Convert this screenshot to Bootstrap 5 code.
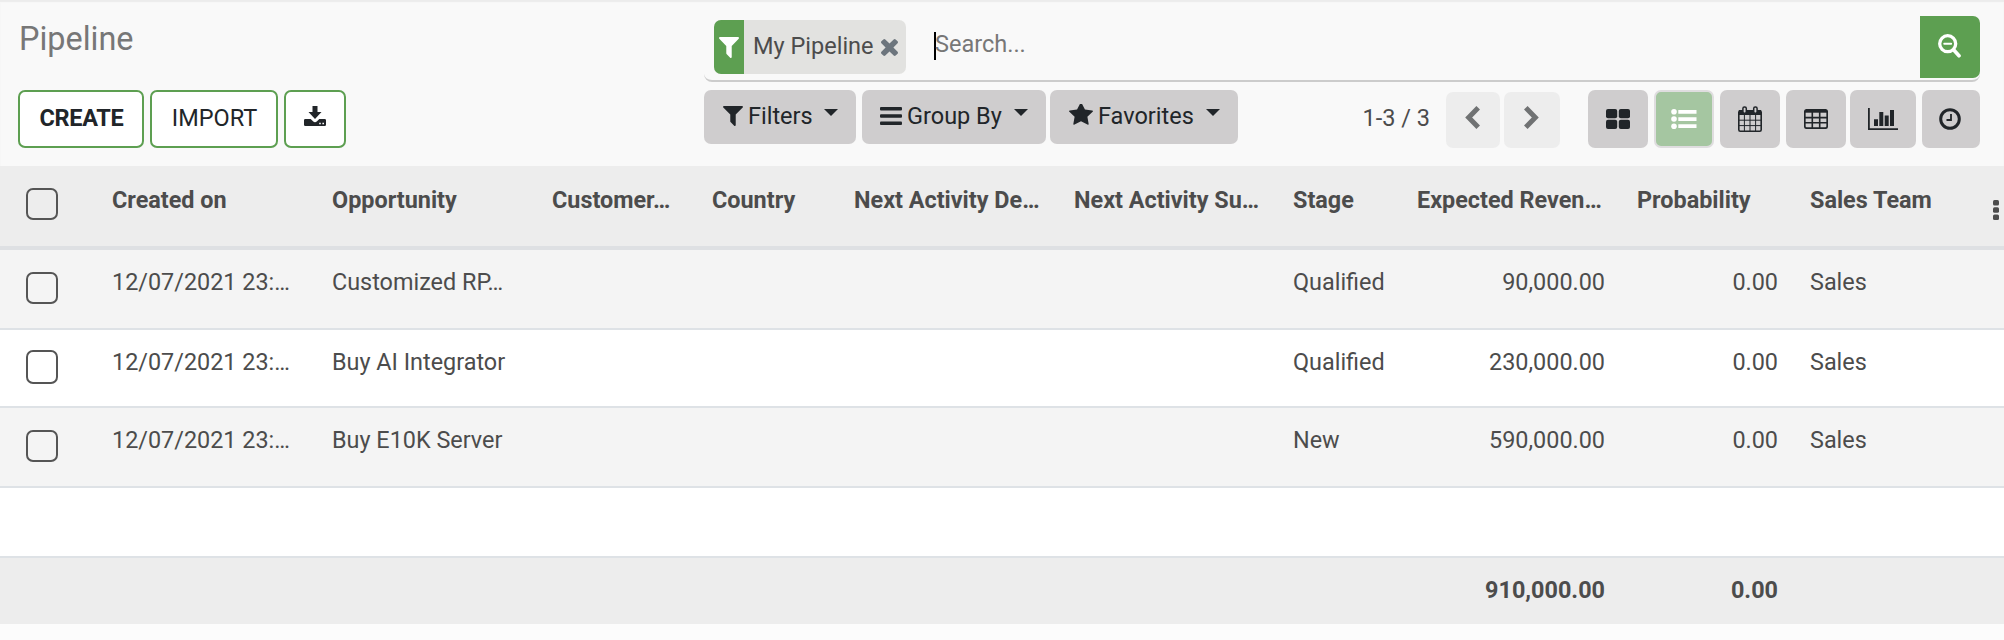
<!DOCTYPE html>
<html lang="en">
<head>
<meta charset="utf-8">
<title>Pipeline</title>
<meta name="viewport" content="width=device-width, initial-scale=1">
<link href="https://cdn.jsdelivr.net/npm/bootstrap@5.3.0/dist/css/bootstrap.min.css" rel="stylesheet">
<style>
  body { font-family: Roboto, sans-serif; font-size: 23.5px; line-height: 36px; color: #4c4c4c; background: #fcfcfc; overflow: hidden; }
  svg { display: block; flex: none; }
  .control-panel { height: 166px; background: #f9f9f9; padding: 16px 24px 0 18px; box-shadow: inset 0 2px 1px #ececec; }
  .panel-left { width: 686px; }
  .view-title { font-size: 32.4px; line-height: 46px; height: 74px; color: #777; padding-left: 1px; }
  .btn { font-size: 23.5px; line-height: 36px; color: #212529; border: 0; border-radius: 7px; padding: 0; white-space: nowrap; }
  .btn-outline-brand { height: 58px; background: #fff; border: 2px solid #5d9f51; padding: 0 18px 2px 19px; }
  .btn-outline-brand.narrow { width: 62px; padding: 0 1px 6px 0; }
  .btn-create { font-weight: 700; letter-spacing: -.3px; }
  .search-bar { height: 66px; border-bottom: 2px solid #ccc; border-radius: 0 0 8px 8px; }
  .facet { width: 192px; height: 54px; margin: 4px 0 0 10px; background: #e2e2e0; border-radius: 7px; overflow: hidden; }
  .facet-icon { width: 30px; background: #5d9f51; }
  .facet-label { width: 137px; padding: 0 0 3px 9px; }
  .caret-line { width: 2px; height: 28px; background: #000; margin: 16px 0 0 28px; }
  .search-hint { color: #777; line-height: 36px; margin-top: 10px; margin-left: -1px; }
  .btn-search { width: 60px; height: 62px; background: #5d9f51; border-radius: 0 7px 7px 0; padding: 0 1px 2px 0; }
  .btn-tool { background: #cfcdce; height: 58px; }
  .btn-menu { height: 54px; padding: 0 16px 2px 19px; }
  .menu-caret { border: 7px solid transparent; border-top-color: #212529; border-bottom: 0; margin-top: -7px; margin-left: 12px; }
  .pager-text { padding: 10px 0 3px; margin-right: 16px; }
  .btn-pager { height: 56px; background: #ededed; margin-top: 2px; padding: 0 1px 5px 0; }
  .btn-tool.selected { background: #a5c6a1; border: 2px solid #dfdddf; }
  .list-table { table-layout: fixed; border-collapse: separate; border-spacing: 0; width: 2004px; font-size: 23.4px; margin: 0; color: #4c4c4c; }
  .list-table th, .list-table td { padding: 14px 16px 0; vertical-align: top; white-space: nowrap; border: 0 solid #dee2e6; box-shadow: none; color: #4c4c4c; background: #fff; }
  .list-table tr { border: 0; }
  .list-table thead th { height: 84px; padding-top: 16px; background: #ededed; border-bottom-width: 4px; border-color: #dee0e3; }
  .list-table tbody td { border-bottom-width: 2px; height: 80px; }
  .list-table tbody tr.low td { height: 78px; }
  .list-table tbody tr.blank td { height: 70px; }
  .list-table tbody tr.odd td { background: #f4f4f4; }
  .list-table tfoot td { height: 66px; background: #ededed; font-weight: 700; }
  .list-table .pick { padding: 22px 0 0 26px; }
  .list-table .low .pick { padding-top: 20px; }
  .list-table .low .box { height: 34px; }
  .list-table .num { text-align: right; }
  .form-check-input.box { display: block; float: none; width: 32px; height: 32px; margin: 0; border: 2px solid #555; border-radius: 7px; background: transparent; }
  .list-table thead .more { padding: 34px 0 0 13px; }
</style>
</head>
<body>
<header class="control-panel d-flex">
  <div class="panel-left flex-shrink-0">
    <div class="view-title">Pipeline</div>
    <div class="d-flex">
      <button class="btn btn-outline-brand btn-create" style="width:126px">CREATE</button>
      <button class="btn btn-outline-brand" style="width:128px;margin:0 6px">IMPORT</button>
      <button class="btn btn-outline-brand narrow d-flex align-items-center justify-content-center" aria-label="Export">
        <svg width="22" height="20" viewBox="0 0 22 20" fill="#212529"><path d="M8.500 0h5v6h4L11 13 4.500 6h4z"/><path fill-rule="evenodd" d="M1.300 13h5.400l2.300 2.300q2 1.700 4 0L15.300 13h5.400q1.300 0 1.300 1.300v4.400q0 1.300-1.300 1.300H1.300Q0 20 0 18.700v-4.400Q0 13 1.300 13zM15.200 16.700v1.600h1.600v-1.600zM18.400 16.700v1.600H20v-1.600z"/></svg>
      </button>
    </div>
  </div>
  <div class="flex-grow-1">
    <div class="search-bar d-flex">
      <div class="facet d-flex align-items-stretch">
        <div class="facet-icon d-flex align-items-center justify-content-center">
          <svg width="20" height="21" viewBox="190 256 1412 1408" preserveAspectRatio="none" fill="#fff"><path d="M1595 295q17 41-14 70l-493 493v742q0 42-39 59-13 5-25 5-27 0-45-19l-256-256q-19-19-19-45v-486l-493-493q-31-29-14-70 17-39 59-39h1280q42 0 59 39z"/></svg>
        </div>
        <div class="facet-label d-flex align-items-center">My Pipeline</div>
        <svg class="align-self-center" width="17" height="17" viewBox="302 290 1188 1188" fill="#6c757d"><path d="M1490 1322q0 40-28 68l-136 136q-28 28-68 28t-68-28l-294-294-294 294q-28 28-68 28t-68-28l-136-136q-28-28-28-68t28-68l294-294-294-294q-28-28-28-68t28-68l136-136q28-28 68-28t68 28l294 294 294-294q28-28 68-28t68 28l136 136q28 28 28 68t-28 68l-294 294 294 294q28 28 28 68z" transform="translate(0 -76)"/></svg>
      </div>
      <div class="caret-line"></div>
      <div class="search-hint">Search...</div>
      <button class="btn btn-search ms-auto d-flex align-items-center justify-content-center" aria-label="Search">
        <svg width="23" height="24" viewBox="0 0 23 24" fill="none" stroke="#fff" stroke-linecap="round"><circle cx="9.700" cy="9.700" r="8" stroke-width="3.300"/><path d="M15.800 16l5.200 5.700" stroke-width="3.700"/><path d="M6.200 9.700h7" stroke-width="1.900"/></svg>
      </button>
    </div>
    <div class="d-flex mt-2">
      <button class="btn btn-tool btn-menu d-flex align-items-center" style="width:152px">
        <svg width="20" height="20" viewBox="190 256 1412 1408" preserveAspectRatio="none" fill="#212529"><path d="M1595 295q17 41-14 70l-493 493v742q0 42-39 59-13 5-25 5-27 0-45-19l-256-256q-19-19-19-45v-486l-493-493q-31-29-14-70 17-39 59-39h1280q42 0 59 39z"/></svg>
        <span style="margin-left:5px">Filters</span><span class="menu-caret" style="margin-left:11px"></span>
      </button>
      <button class="btn btn-tool btn-menu d-flex align-items-center" style="width:184px;margin:0 4px 0 6px;padding-left:18px">
        <svg width="22" height="18" viewBox="0 0 22 18" fill="#212529"><rect width="22" height="3.600" rx="1"/><rect y="7.200" width="22" height="3.600" rx="1"/><rect y="14.400" width="22" height="3.600" rx="1"/></svg>
        <span style="margin-left:5px">Group By</span><span class="menu-caret"></span>
      </button>
      <button class="btn btn-tool btn-menu d-flex align-items-center" style="width:188px">
        <svg width="24" height="22" style="margin-top:-3px" viewBox="64 188 1664 1587" preserveAspectRatio="none" fill="#212529"><path d="M1728 647q0 22-26 48l-363 354 86 500q1 7 1 20 0 21-10.500 35.500t-30.500 14.500q-19 0-40-12l-449-236-449 236q-22 12-40 12-21 0-31.500-14.500t-10.500-35.500q0-6 2-20l86-500-364-354q-25-27-25-48 0-37 56-46l502-73 225-455q19-41 49-41t49 41l225 455 502 73q56 9 56 46z" transform="translate(0 60)"/></svg>
        <span style="margin-left:5px">Favorites</span><span class="menu-caret"></span>
      </button>
      <div class="d-flex align-items-start ms-auto">
        <div class="pager-text">1-3 / 3</div>
        <button class="btn btn-pager d-flex align-items-center justify-content-center" style="width:54px" aria-label="Previous">
          <svg width="15" height="23" viewBox="0 0 15 23" fill="none" stroke="#707273" stroke-width="5"><path d="M13.200 1.800L3.700 11.500l9.500 9.700" stroke-linejoin="miter"/></svg>
        </button>
        <button class="btn btn-pager d-flex align-items-center justify-content-center" style="width:56px;margin-left:4px" aria-label="Next">
          <svg width="15" height="23" viewBox="0 0 15 23" fill="none" stroke="#707273" stroke-width="5"><path d="M1.800 1.800l9.500 9.700-9.500 9.700"/></svg>
        </button>
        <div class="d-flex" style="margin-left:28px;gap:6px">
          <button class="btn btn-tool d-flex align-items-center justify-content-center" style="width:60px" aria-label="Kanban">
            <svg width="24" height="20" viewBox="0 0 24 20" fill="#212529"><rect width="11.200" height="9.300" rx="2"/><rect x="12.800" width="11.200" height="9.300" rx="2"/><rect y="10.700" width="11.200" height="9.300" rx="2"/><rect x="12.800" y="10.700" width="11.200" height="9.300" rx="2"/></svg>
          </button>
          <button class="btn btn-tool selected d-flex align-items-center justify-content-center" style="width:60px" aria-label="List">
            <svg width="26" height="20" viewBox="0 0 26 20" fill="#fff"><circle cx="3" cy="2.800" r="2.800"/><circle cx="3" cy="10" r="2.800"/><circle cx="3" cy="17.200" r="2.800"/><path d="M7.300 1h18.200v3.700H7.300zM7.300 8.200h18.200v3.700H7.300zM7.300 15.300h18.200V19H7.300z"/></svg>
          </button>
          <button class="btn btn-tool d-flex align-items-center justify-content-center" style="width:60px" aria-label="Calendar">
            <svg width="24" height="26" viewBox="0 0 24 26"><rect x=".8" y="4.800" width="22.400" height="20.400" rx="1.500" fill="none" stroke="#212529" stroke-width="1.600"/><path d="M1 4h22v5H1z" fill="#212529"/><path d="M6.400 9v16M12 9v16M17.600 9v16M1 14.200h22M1 19.600h22" stroke="#212529" stroke-width="1"/><rect x="4.900" y="1" width="3.400" height="6.300" rx="1.500" fill="#cfcdce" stroke="#212529" stroke-width="1.500"/><rect x="15.700" y="1" width="3.400" height="6.300" rx="1.500" fill="#cfcdce" stroke="#212529" stroke-width="1.500"/></svg>
          </button>
          <button class="btn btn-tool d-flex align-items-center justify-content-center" style="width:60px;padding-right:1px" aria-label="Pivot">
            <svg width="24" height="20" viewBox="0 0 24 20"><rect x=".8" y=".8" width="22.400" height="18.400" rx="2" fill="none" stroke="#212529" stroke-width="1.700"/><path d="M1 1h22v2.700H1z" fill="#212529"/><path d="M8.300 3v16M15.700 3v16M1 8.600h22M1 13.800h22" stroke="#212529" stroke-width="1.600"/></svg>
          </button>
          <button class="btn btn-tool d-flex align-items-center justify-content-center" style="width:66px;margin-left:-2px" aria-label="Graph">
            <svg width="30" height="22" viewBox="0 0 30 22" fill="#212529"><path d="M0 0h1.800v20.200H30V22H0zM6 11.200h4V18H6zM11.300 4h4v14h-4zM16.700 7.500h4V18h-4zM22 2h4v16h-4z"/></svg>
          </button>
          <button class="btn btn-tool d-flex align-items-center justify-content-center" style="width:58px;padding-right:2px" aria-label="Activity">
            <svg width="22" height="22" viewBox="0 0 22 22" fill="none" stroke="#212529"><circle cx="11" cy="11" r="9.300" stroke-width="3"/><path d="M12 6v6H7.500" stroke-width="1.800"/></svg>
          </button>
        </div>
      </div>
    </div>
  </div>
</header>

<table class="table list-table">
  <colgroup>
    <col style="width:96px"><col style="width:220px"><col style="width:220px"><col style="width:160px"><col style="width:142px"><col style="width:220px"><col style="width:219px"><col style="width:124px"><col style="width:220px"><col style="width:173px"><col style="width:186px"><col style="width:24px">
  </colgroup>
  <thead>
    <tr>
      <th class="pick"><input class="form-check-input box" type="checkbox" aria-label="Select all"></th>
      <th>Created on</th><th>Opportunity</th><th>Customer…</th><th>Country</th><th>Next Activity De…</th><th>Next Activity Su…</th><th>Stage</th><th>Expected Reven…</th><th>Probability</th><th>Sales Team</th>
      <th class="more"><svg width="6" height="20" viewBox="0 0 6 20" fill="#4c4c4c"><rect width="6" height="5.400" rx="1.500"/><rect y="7.300" width="6" height="5.400" rx="1.500"/><rect y="14.600" width="6" height="5.400" rx="1.500"/></svg></th>
    </tr>
  </thead>
  <tbody>
    <tr class="odd"><td class="pick"><input class="form-check-input box" type="checkbox" aria-label="Select"></td><td>12/07/2021 23:…</td><td>Customized RP…</td><td></td><td></td><td></td><td></td><td>Qualified</td><td class="num">90,000.00</td><td class="num">0.00</td><td>Sales</td><td></td></tr>
    <tr class="low"><td class="pick"><input class="form-check-input box" type="checkbox" aria-label="Select"></td><td>12/07/2021 23:…</td><td>Buy AI Integrator</td><td></td><td></td><td></td><td></td><td>Qualified</td><td class="num">230,000.00</td><td class="num">0.00</td><td>Sales</td><td></td></tr>
    <tr class="odd"><td class="pick"><input class="form-check-input box" type="checkbox" aria-label="Select"></td><td>12/07/2021 23:…</td><td>Buy E10K Server</td><td></td><td></td><td></td><td></td><td>New</td><td class="num">590,000.00</td><td class="num">0.00</td><td>Sales</td><td></td></tr>
    <tr class="blank"><td colspan="12"></td></tr>
  </tbody>
  <tfoot>
    <tr><td colspan="8"></td><td class="num">910,000.00</td><td class="num">0.00</td><td></td><td></td></tr>
  </tfoot>
</table>
<script src="https://cdn.jsdelivr.net/npm/bootstrap@5.3.0/dist/js/bootstrap.bundle.min.js"></script>
</body>
</html>
